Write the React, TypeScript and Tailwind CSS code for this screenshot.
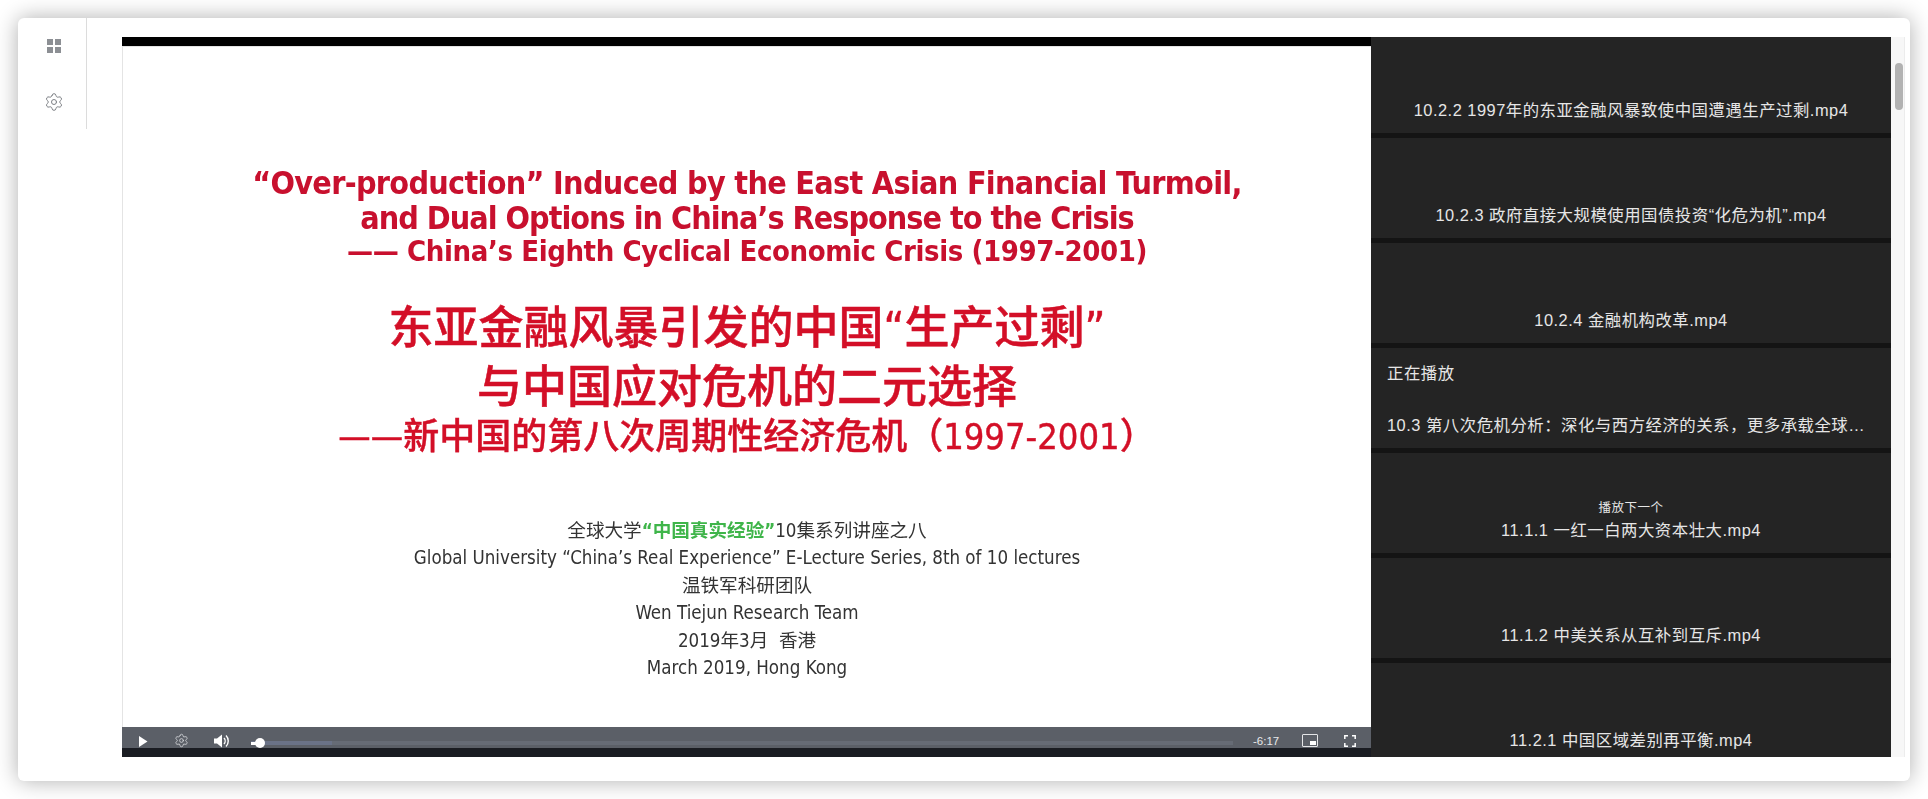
import React from "react";
import { Settings } from "lucide-react";

const cjk = '"Liberation Sans","Noto Sans CJK SC",sans-serif';
const slide = '"DejaVu Sans Condensed","Noto Sans CJK SC",sans-serif';

function Item({ name, next, h = "h-[105px]" }: { name: string; next?: boolean; h?: string }) {
  return (
    <div className={`${h} shrink-0 bg-[#242424] border-b-[5px] border-[#141414] flex flex-col items-center justify-end pb-[13px] text-[#e6e6e6]`}>
      {next && <div className="text-[12.5px] leading-[18px] tracking-[0.5px] mb-[3px]">播放下一个</div>}
      <div className="text-[16.4px] leading-[20px] tracking-[0.5px]">{name}</div>
    </div>
  );
}

export default function App() {
  return (
    <div className="h-[799px] w-[1928px] overflow-hidden bg-white p-[18px]">
      <div className="h-[763px] w-[1892px] rounded-[6px] bg-white shadow-[0_0_22px_rgba(0,0,0,0.32)] flex items-start">
        <aside className="w-[69px] h-[111px] shrink-0 border-r border-[#dcdcdc] flex flex-col items-center pl-[4px] pt-[21px]">
          <div className="grid grid-cols-2 gap-[1.5px] w-[14px]">
            <span className="h-[6px] bg-[#8c8f94]" />
            <span className="h-[6px] bg-[#8c8f94]" />
            <span className="h-[6px] bg-[#8c8f94]" />
            <span className="h-[6px] bg-[#8c8f94]" />
          </div>
          <Settings className="mt-[39px]" size={20} color="#7d8085" strokeWidth={1.2} />
        </aside>

        <main className="ml-[35px] mt-[19px] flex h-[720px] w-[1783px] shrink-0">
          <section className="w-[1249px] shrink-0 flex flex-col bg-black">
            <div className="h-[9px] shrink-0 bg-black" />
            <div className="h-[681px] shrink-0 bg-white border-l border-t border-[#e4e4e4] flex flex-col items-center overflow-hidden blur-[0.4px]" style={{ fontFamily: slide }}>
              <div className="mt-[118px] text-[32px] leading-[36px] font-bold tracking-[-0.7px] text-[#c8102e] whitespace-nowrap">“Over-production” Induced by the East Asian Financial Turmoil,</div>
              <div className="text-[32px] leading-[34px] font-bold tracking-[-1px] text-[#c8102e] whitespace-nowrap">and Dual Options in China’s Response to the Crisis</div>
              <div className="text-[29px] leading-[32px] font-bold tracking-[-0.4px] text-[#c8102e] whitespace-nowrap">—— China’s Eighth Cyclical Economic Crisis (1997-2001)</div>
              <div className="mt-[32px] text-[45px] leading-[60px] font-medium [-webkit-text-stroke:0.5px_#d30f27] text-[#d30f27] whitespace-nowrap">东亚金融风暴引发的中国“生产过剩”</div>
              <div className="text-[45px] leading-[57px] font-medium [-webkit-text-stroke:0.5px_#d30f27] text-[#d30f27] whitespace-nowrap">与中国应对危机的二元选择</div>
              <div className="text-[36px] leading-[42px] font-medium [-webkit-text-stroke:0.4px_#d30f27] text-[#d30f27] whitespace-nowrap">——新中国的第八次周期性经济危机（1997-2001）</div>
              <div className="mt-[59px] text-[#333] text-[18.6px] leading-[27.4px] text-center whitespace-nowrap">
                <div>全球大学<span className="text-[#3fb54a] font-semibold">“中国真实经验”</span>10集系列讲座之八</div>
                <div>Global University “China’s Real Experience” E-Lecture Series, 8th of 10 lectures</div>
                <div>温铁军科研团队</div>
                <div>Wen Tiejun Research Team</div>
                <div>2019年3月&nbsp;&nbsp;香港</div>
                <div>March 2019, Hong Kong</div>
              </div>
            </div>
            <div className="h-[30px] shrink-0 bg-[#1a1c22] relative">
              <div className="absolute inset-x-0 top-0 h-[21px] bg-[#5b5f67]" />
              <div className="absolute inset-0 flex items-start text-white" style={{ fontFamily: cjk }}>
                <svg className="ml-[16px] mt-[9px]" width="10" height="11" viewBox="0 0 10 11"><path d="M1 0l8.5 5.5L1 11z" fill="#fff" /></svg>
                <Settings className="ml-[26px] mt-[6px]" size={15} color="#d8d9dc" strokeWidth={1.3} />
                <svg className="ml-[25px] mt-[7px]" width="15" height="14" viewBox="0 0 15 14" fill="#fff"><path d="M0 4.5h3L8 .5v13l-5-4H0z" /><path d="M10 4c1.5 1.6 1.5 4.4 0 6" fill="none" stroke="#fff" strokeWidth="1.4" /><path d="M12 1.5c3 3 3 8 0 11" fill="none" stroke="#fff" strokeWidth="1.4" /></svg>
                <div className="relative ml-[22px] mt-[14px] h-[4px] w-[982px] bg-[#666b75]">
                  <div className="absolute left-0 top-0 h-full w-[81px] bg-[#6a7287]" />
                  <div className="absolute left-0 top-[0.5px] h-[3px] w-[8px] bg-white" />
                  <div className="absolute left-[4px] -top-[3px] h-[10px] w-[10px] rounded-full bg-white" />
                </div>
                <div className="ml-[20px] mt-[7px] text-[11.5px] leading-[14px] text-[#e8e8ea]">-6:17</div>
                <div className="ml-[23px] mt-[7px] h-[13px] w-[16px] rounded-[1px] border-[1.5px] border-[#e4e5e7] flex items-end justify-end p-[1.5px]">
                  <span className="h-[4px] w-[6px] bg-white" />
                </div>
                <svg className="ml-[26px] mt-[7.5px]" width="12" height="12" viewBox="0 0 12 12" fill="none" stroke="#fff" strokeWidth="1.5"><path d="M0.8 4V0.8H4M8 0.8h3.2V4M11.2 8v3.2H8M4 11.2H0.8V8" /></svg>
              </div>
            </div>
          </section>

          <section className="w-[520px] shrink-0 overflow-hidden flex flex-col bg-[#242424] text-[#e6e6e6]" style={{ fontFamily: cjk }}>
            <Item h="h-[101px]" name="10.2.2 1997年的东亚金融风暴致使中国遭遇生产过剩.mp4" />
            <Item name="10.2.3 政府直接大规模使用国债投资“化危为机”.mp4" />
            <Item name="10.2.4 金融机构改革.mp4" />
            <div className="h-[105px] shrink-0 border-b-[5px] border-[#141414] bg-[#242424] pl-[16px] pr-[25px] flex flex-col">
              <div className="mt-[15px] text-[16.4px] leading-[20px] tracking-[0.5px]">正在播放</div>
              <div className="mt-[32px] text-[16.4px] leading-[20px] tracking-[0.5px] truncate">10.3 第八次危机分析：深化与西方经济的关系，更多承载全球化代价与危机</div>
            </div>
            <Item next name="11.1.1 一红一白两大资本壮大.mp4" />
            <Item name="11.1.2 中美关系从互补到互斥.mp4" />
            <Item name="11.2.1 中国区域差别再平衡.mp4" />
          </section>

          <div className="w-[14px] shrink-0 bg-[#f7f7f7] border-r border-[#ececec] px-[3.5px] pt-[26px]">
            <div className="h-[47px] w-[8px] rounded-[4px] bg-[#b2b2b2]" />
          </div>
        </main>
      </div>
    </div>
  );
}
